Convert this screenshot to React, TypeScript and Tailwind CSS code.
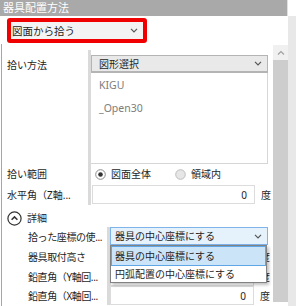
import React from 'react';

function Chevron({ up = false, color = '#555' }: { up?: boolean; color?: string }) {
    return (
        <svg width="8" height="5" viewBox="0 0 8 5" className="shrink-0">
            <path
                d={up ? 'M1 4.5 L4 1.5 L7 4.5' : 'M1 0.8 L4 3.8 L7 0.8'}
                fill="none"
                stroke={color}
                strokeWidth="1.2"
            />
        </svg>
    );
}

function Radio({ checked }: { checked?: boolean }) {
    return (
        <svg width="11" height="11" viewBox="0 0 11 11" className="shrink-0">
            <circle cx="5.5" cy="5.5" r="4.8" fill={checked ? '#ffffff' : '#e6e6e6'} stroke={checked ? '#8a8a8a' : '#bdbdbd'} />
            {checked && <circle cx="5.5" cy="5.5" r="2.3" fill="#333" />}
        </svg>
    );
}

function NumberInput({ width }: { width: string }) {
    return (
        <div className="flex items-center">
            <div className={`${width} h-[19px] border border-[#dcdcdc] bg-white flex items-center justify-end pr-[7px]`}>0</div>
            <span className="ml-[6px]">度</span>
        </div>
    );
}

export default function App() {
    return (
        <div className="w-[296px] h-[306px] overflow-hidden bg-white flex flex-col font-['Noto_Sans','Noto_Sans_CJK_JP',sans-serif] text-[10px] leading-[16px] text-[#1e1e1e] whitespace-nowrap">
            {/* title bar */}
            <div className="flex h-[16px] shrink-0">
                <div className="w-[287px] bg-[#a9a9a9] text-white text-[11px] pl-[3px] leading-[16px]">器具配置方法</div>
                <div className="flex-1 bg-white border-l border-[#e0e0e0]" />
            </div>

            <div className="flex flex-1 min-h-0">
                <div className="w-[273px] flex flex-col">
                    {/* highlighted mode select */}
                    <div className="pt-[2px] pl-[7px] h-[28px] shrink-0">
                        <div className="w-[140px] h-[25px] border-[4px] border-[#f00000] rounded-[3px] bg-[#f3f3f3] flex items-center pl-[1px] pr-[5px]">
                            <span className="flex-1 text-[10.5px]">図面から拾う</span>
                            <Chevron />
                        </div>
                    </div>

                    {/* property panel */}
                    <div className="ml-[1px] flex-1 border-l border-[#a6a6a6] flex flex-col">
                        {/* upper section */}
                        <div className="flex mt-[6px]">
                            <div className="w-[86px] flex flex-col pl-[5px]">
                                <div className="h-[114px] pt-[7px]">拾い方法</div>
                                <div className="h-[20px] flex items-center">拾い範囲</div>
                                <div className="h-[21px] flex items-center">水平角（Z軸...</div>
                            </div>
                            <div className="w-[3px] bg-[#dadada]" />
                            <div className="w-[177px] flex flex-col">
                                <div className="h-[114px] pt-[5px]">
                                    <div className="h-[18px] border border-[#b4b4b4] border-b-2 bg-[#e9e9e9] flex items-center pl-[7px] pr-[5px]">
                                        <span className="flex-1">図形選択</span>
                                        <Chevron />
                                    </div>
                                    <div className="h-[91px] border-r border-b border-[#d6d6d6] bg-white text-[#7d7d7d] text-[10.5px]">
                                        <div className="h-[23px] flex items-center pl-[8px]">KIGU</div>
                                        <div className="h-[23px] flex items-center pl-[8px]">_Open30</div>
                                    </div>
                                </div>
                                <div className="h-[20px] flex items-center pl-[4px]">
                                    <div className="w-[80px] flex items-center gap-[5px]">
                                        <Radio checked />
                                        <span>図面全体</span>
                                    </div>
                                    <div className="flex items-center gap-[5px]">
                                        <Radio />
                                        <span>領域内</span>
                                    </div>
                                </div>
                                <div className="h-[21px] flex items-center pl-[1px]">
                                    <NumberInput width="w-[163px]" />
                                </div>
                            </div>
                        </div>

                        {/* details toggle */}
                        <div className="h-[22px] pt-[4px] flex items-center pl-[5px] gap-[5px]">
                            <svg width="15" height="15" viewBox="0 0 15 15" className="shrink-0">
                                <circle cx="7.5" cy="7.5" r="6.6" fill="none" stroke="#333" strokeWidth="1.2" />
                                <path d="M4.6 8.8 L7.5 5.9 L10.4 8.8" fill="none" stroke="#333" strokeWidth="1.5" />
                            </svg>
                            <span>詳細</span>
                        </div>

                        {/* detail section */}
                        <div className="flex">
                            <div className="w-[105px] flex flex-col pl-[26px] tracking-[-0.4px]">
                                <div className="h-[20px] flex items-center">拾った座標の使...</div>
                                <div className="h-[20px] flex items-center">器具取付高さ</div>
                                <div className="h-[19px] flex items-center">鉛直角（Y軸回...</div>
                                <div className="h-[19px] flex items-center">鉛直角（X軸回...</div>
                            </div>
                            <div className="w-[3px] bg-[#dadada]" />
                            <div className="w-[158px] flex flex-col relative">
                                <div className="h-[20px]">
                                    <div className="h-[18px] border border-[#7eb4ea] bg-[#e5f1fb] flex items-center pl-[4px] pr-[5px]">
                                        <span className="flex-1">器具の中心座標にする</span>
                                        <Chevron />
                                    </div>
                                </div>
                                <div className="h-[20px] flex items-center">
                                    <NumberInput width="w-[144px]" />
                                </div>
                                <div className="h-[19px] flex items-center">
                                    <NumberInput width="w-[144px]" />
                                </div>
                                <div className="h-[19px] flex items-center">
                                    <NumberInput width="w-[144px]" />
                                </div>

                                {/* open dropdown list */}
                                <div className="absolute top-[18px] left-0 w-[157px] h-[38px] bg-white border border-[#828282] shadow-[2px_2px_3px_rgba(0,0,0,0.25)] flex flex-col">
                                    <div className="h-[20px] bg-[#cce4f7] border border-[#5ea6e6] flex items-center pl-[3px]">器具の中心座標にする</div>
                                    <div className="flex-1 flex items-center pl-[4px]">円弧配置の中心座標にする</div>
                                </div>
                            </div>
                        </div>
                    </div>
                </div>

                {/* scrollbar */}
                <div className="w-[15px] flex flex-col">
                    <div className="h-[29px] bg-white" />
                    <div className="h-[15px] bg-[#f0f0f0] flex items-center justify-center">
                        <Chevron up color="#a0a0a0" />
                    </div>
                    <div className="flex-1 bg-[#cdcdcd] mb-[4px]" />
                </div>
                <div className="flex-1 bg-[#e8e8e8]" />
            </div>
        </div>
    );
}
